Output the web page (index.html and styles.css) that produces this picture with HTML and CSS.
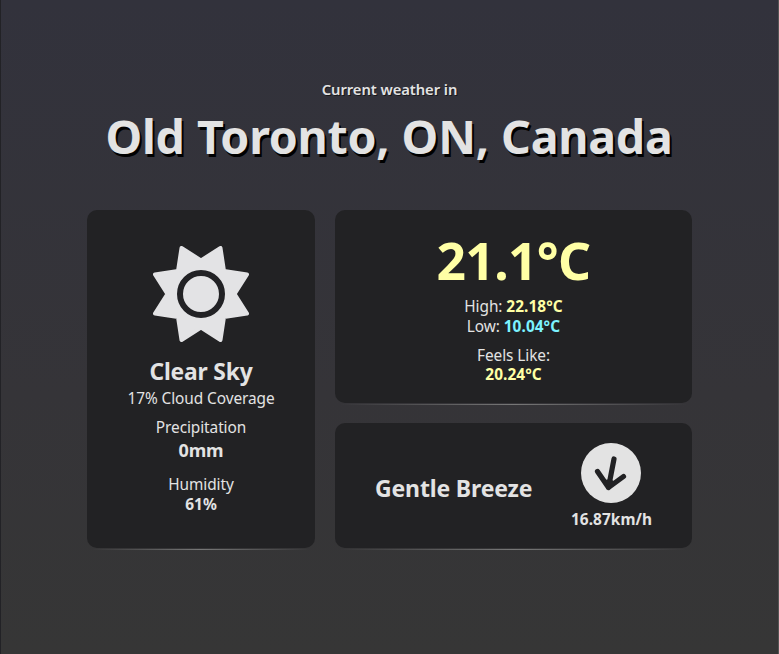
FILE: index.html
```html
<!DOCTYPE html>
<html lang="en">
<head>
<meta charset="utf-8">
<title>Current weather</title>
<link rel="stylesheet" href="styles.css">
</head>
<body>
<header>
<p class="intro">Current weather in</p>
<h1>Old Toronto, ON, Canada</h1>
</header>
<main>
<section class="card sky">
<svg class="sun" viewBox="0 0 96 96"><path d="M28.5 2L48 14.4L67.5 2L71 25L94 28.5L81.6 48L94 67.5L71 71L67.5 94L48 81.6L28.5 94L25 71L2 67.5L14.4 48L2 28.5L25 25Z" fill="#e3e3e5" stroke="#e3e3e5" stroke-width="4" stroke-linejoin="round"/><circle cx="48" cy="48" r="21" fill="#e3e3e5" stroke="#222225" stroke-width="6"/></svg>
<h2>Clear Sky</h2>
<p class="cloud">17% Cloud Coverage</p>
<p class="label">Precipitation</p>
<p class="rain">0mm</p>
<p class="humid">Humidity</p>
<p><b>61%</b></p>
</section>
<section class="card temp">
<div class="now">21.1°C</div>
<p>High: <b class="warm">22.18°C</b></p>
<p>Low: <b class="cool">10.04°C</b></p>
<p class="feels">Feels Like:</p>
<p class="feels-value"><b class="warm">20.24°C</b></p>
</section>
<section class="card wind">
<h2>Gentle Breeze</h2>
<div class="speed">
<svg class="arrow" viewBox="0 0 60 60"><circle cx="30" cy="30" r="30" fill="#e3e3e3"/><path d="M33 16L27.5 44.5M16.5 28.5L27.5 44.5L42.5 33.5" fill="none" stroke="#222224" stroke-width="5.2" stroke-linecap="round" stroke-linejoin="round"/><path d="M24 37L27.5 44.5L34 39L29.5 36Z" fill="#222224"/></svg>
<p><b>16.87km/h</b></p>
</div>
</section>
</main>
</body>
</html>
```
FILE: styles.css
```css
* { box-sizing: border-box; }
body {
  margin: 0;
  height: 654px;
  overflow: hidden;
  border-left: 1px solid #222226;
  border-right: 1px solid #555;
  padding-top: 79px;
  color: #e3e3e3;
  background: linear-gradient(#32323c, #353438 60%, #363636);
  font: 15.4px/20px "Noto Sans", sans-serif;
  letter-spacing: -0.08px;
  text-align: center;
}
h1, h2, p { margin: 0; }
b { font-weight: 700; letter-spacing: 0.07px; }
header { height: 131px; }
.intro { font-weight: 600; font-size: 14.8px; text-shadow: 1px 1px 0 #17171a; }
h1 {
  margin: 9px 1px 0 0;
  font-size: 46.5px;
  line-height: 56px;
  letter-spacing: -0.25px;
  word-spacing: 0.5px;
  text-shadow: 2px 3px 0 #000;
  white-space: nowrap;
}
h2 { font-size: 22.8px; line-height: 30px; letter-spacing: -0.15px; }
main {
  display: grid;
  width: 605px;
  margin: 0 auto;
  grid-template-columns: 228px 357px;
  grid-template-rows: 193px 125px;
  gap: 20px;
}
.card { position: relative; background: #222224; border-radius: 10px; }
.card::after {
  content: "";
  position: absolute;
  left: 5px;
  right: 5px;
  bottom: -2px;
  height: 1px;
  background: linear-gradient(90deg, transparent, #777, transparent);
}
.sky { grid-row: 1 / 3; padding-top: 36px; }
.sun { display: block; width: 96px; height: 96px; margin: 0 auto 15px; }
.cloud { margin-top: 2px; }
.label { margin-top: 9px; }
.rain { font-size: 18px; line-height: 24px; font-weight: 700; }
.humid { margin-top: 13px; }
.temp { padding-top: 20px; }
.now { color: #ffffa5; font-size: 51.5px; font-weight: 700; line-height: 60px; letter-spacing: -0.6px; margin-bottom: 7px; }
.warm { color: #ffffa5; }
.cool { color: #7cf3ff; }
.feels { margin-top: 9px; }
.feels-value { margin-top: -1px; }
.wind { display: flex; align-items: center; justify-content: space-between; padding: 4px 40px 0; }
.wind h2 { font-size: 23px; }
.speed { margin-top: -3px; }
.arrow { display: block; width: 60px; height: 60px; margin: 0 auto 7px; }
```
